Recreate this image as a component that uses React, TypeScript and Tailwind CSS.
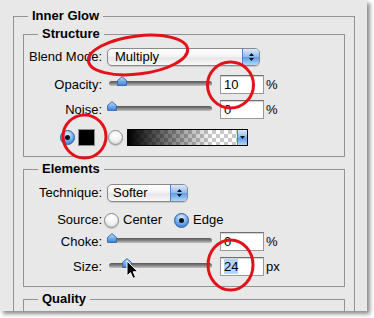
import type { ReactNode } from 'react'

function Label({ children }: { children: ReactNode }) {
  return <span className="w-[78px] shrink-0 text-right">{children}</span>
}

function Stepper() {
  return (
    <span className="flex w-[17px] shrink-0 flex-col items-center justify-center gap-[2px] border-l border-[#4f7fc0] bg-[linear-gradient(#dcebfc,#8dbcf1_48%,#5b9de9_52%,#b4d6f8)]">
      <svg width="5" height="3" viewBox="0 0 5 3">
        <path d="M2.5 0 L5 3 L0 3 Z" fill="#111" />
      </svg>
      <svg width="5" height="3" viewBox="0 0 5 3">
        <path d="M0 0 L5 0 L2.5 3 Z" fill="#111" />
      </svg>
    </span>
  )
}

function Popup({ value, width, pad }: { value: string; width: string; pad: string }) {
  return (
    <div
      className={`ml-[5px] flex h-[18px] ${width} overflow-hidden rounded-[5px] border border-[#8a8a8a] bg-[linear-gradient(#ffffff,#f5f5f5_45%,#e6e6e6_55%,#f7f7f7)] shadow-[0_1px_1px_rgba(0,0,0,0.15)]`}
    >
      <span className={`flex-1 ${pad} leading-[16px]`}>{value}</span>
      <Stepper />
    </div>
  )
}

function Thumb() {
  return (
    <svg width="10" height="10" viewBox="0 0 10 10">
      <defs>
        <linearGradient id="thumb" x1="0" y1="0" x2="0" y2="1">
          <stop offset="0" stopColor="#c6e0fb" />
          <stop offset="0.5" stopColor="#78b0ee" />
          <stop offset="1" stopColor="#3f82dc" />
        </linearGradient>
      </defs>
      <path d="M5 0.6 L9.4 4.4 L9.4 9.4 L0.6 9.4 L0.6 4.4 Z" fill="url(#thumb)" stroke="#3b69aa" strokeWidth="1" strokeLinejoin="round" />
    </svg>
  )
}

function Slider({ offset }: { offset: string }) {
  return (
    <div className="relative ml-[5px] h-[19px] w-[105px] shrink-0">
      <div className="ml-[2px] mt-[6px] h-[5px] rounded-full bg-[linear-gradient(#555555,#8a8a8a_55%,#c4c4c4)]" />
      <div className={`absolute top-[1px] ${offset}`}>
        <Thumb />
      </div>
    </div>
  )
}

function Field({ children, unit }: { children: ReactNode; unit: string }) {
  return (
    <>
      <div className="ml-[8px] h-[19px] w-[44px] shrink-0 border border-[#999999] border-t-[#6f6f6f] bg-white pl-[3px] leading-[17px] shadow-[inset_0_1px_1px_rgba(0,0,0,0.18)]">
        {children}
      </div>
      <span className="ml-[2px]">{unit}</span>
    </>
  )
}

function Radio({ on, className = '' }: { on?: boolean; className?: string }) {
  return on ? (
    <span
      className={`flex h-[15px] w-[15px] shrink-0 items-center justify-center rounded-full border border-[#2d5e9e] bg-[radial-gradient(circle_at_50%_28%,#e2f0ff,#6aa8ee_55%,#2c6cc6)] ${className}`}
    >
      <span className="h-[5px] w-[5px] rounded-full bg-[#111]" />
    </span>
  ) : (
    <span
      className={`block h-[15px] w-[15px] shrink-0 rounded-full border border-[#8a8a8a] bg-[radial-gradient(circle_at_50%_30%,#ffffff,#f3f3f3_50%,#c9c9c9)] shadow-[0_1px_1px_rgba(0,0,0,0.15)] ${className}`}
    />
  )
}

function Group({ title, children }: { title: string; children: ReactNode }) {
  return (
    <fieldset className="border border-[#939393]">
      <legend className="ml-[14px] px-[4px] font-bold leading-[16px]">{title}</legend>
      {children}
    </fieldset>
  )
}

export default function App() {
  return (
    <div className="h-[318px] w-[374px] bg-white font-['Liberation_Sans',Arial,sans-serif] text-[13px] text-black">
      <div className="relative h-[311px] w-[367px] overflow-hidden bg-[#e8e8e8] pl-[13px] pt-[8px] shadow-[3px_3px_4px_rgba(0,0,0,0.45)]">
        <div className="w-[342px]">
          <Group title="Inner Glow">
            <div className="flex flex-col px-[9px] pb-[40px] pt-[2px]">
              <Group title="Structure">
                <div className="flex flex-col pb-[10px] pt-[6px]">
                  <div className="flex h-[18px] items-center">
                    <Label>Blend Mode:</Label>
                    <Popup value="Multiply" width="w-[153px]" pad="pl-[7px]" />
                  </div>
                  <div className="mt-[9px] flex h-[19px] items-center">
                    <Label>Opacity:</Label>
                    <Slider offset="left-[10px]" />
                    <Field unit="%">10</Field>
                  </div>
                  <div className="mt-[6px] flex h-[19px] items-center">
                    <Label>Noise:</Label>
                    <Slider offset="left-0" />
                    <Field unit="%">0</Field>
                  </div>
                  <div className="mt-[10px] flex h-[17px] items-center pl-[36px]">
                    <Radio on />
                    <span className="ml-[3px] h-[17px] w-[17px] border border-[#8c8c8c] bg-black" />
                    <Radio className="ml-[13px]" />
                    <div className="ml-[4px] flex h-[17px] border border-black">
                      <span className="w-[109px] bg-[linear-gradient(to_right,#000000_0%,rgba(0,0,0,0)_78%),repeating-conic-gradient(#c8c8c8_0_25%,#ffffff_0_50%)] [background-size:100%_100%,8px_8px]" />
                      <span className="flex w-[10px] items-center justify-center border-l border-[#4f7fc0] bg-[linear-gradient(#dcebfc,#8dbcf1_48%,#5b9de9_52%,#b4d6f8)]">
                        <svg width="5" height="3" viewBox="0 0 5 3">
                          <path d="M0 0 L5 0 L2.5 3 Z" fill="#111" />
                        </svg>
                      </span>
                    </div>
                  </div>
                </div>
              </Group>

              <div className="mt-[4px]">
                <Group title="Elements">
                  <div className="flex flex-col pb-[10px] pt-[7px]">
                    <div className="flex h-[18px] items-center">
                      <Label>Technique:</Label>
                      <Popup value="Softer" width="w-[81px]" pad="pl-[5px]" />
                    </div>
                    <div className="mt-[10px] flex h-[16px] items-center">
                      <Label>Source:</Label>
                      <Radio className="ml-[2px]" />
                      <span className="ml-[4px]">Center</span>
                      <Radio on className="ml-[12px]" />
                      <span className="ml-[4px]">Edge</span>
                    </div>
                    <div className="mt-[4px] flex h-[19px] items-center">
                      <Label>Choke:</Label>
                      <Slider offset="left-0" />
                      <Field unit="%">0</Field>
                    </div>
                    <div className="mt-[6px] flex h-[19px] items-center">
                      <Label>Size:</Label>
                      <Slider offset="left-[15px]" />
                      <Field unit="px">
                        <span className="bg-[#b5d5ff]">24</span>
                      </Field>
                    </div>
                  </div>
                </Group>
              </div>

              <div className="mt-[4px]">
                <Group title="Quality">
                  <div className="h-[40px]" />
                </Group>
              </div>
            </div>
          </Group>
        </div>

        {/* cursor */}
        <svg className="pointer-events-none absolute left-[126px] top-[260px]" width="14" height="20" viewBox="0 0 14 20">
          <path d="M1 1 L1 16 L4.5 12.6 L7 18.4 L9.6 17.3 L7.2 11.8 L12 11.8 Z" fill="#000" stroke="#fff" strokeWidth="1" strokeLinejoin="round" />
        </svg>

        {/* red annotations */}
        <svg className="pointer-events-none absolute left-0 top-0" width="367" height="311" viewBox="0 0 367 311">
          <g fill="none" stroke="#e3121a" strokeWidth="3">
            <ellipse cx="138" cy="55" rx="50" ry="19" transform="rotate(-7 138 55)" />
            <ellipse cx="230.5" cy="85" rx="23" ry="23" />
            <ellipse cx="84.5" cy="136.5" rx="21.5" ry="21.5" />
            <ellipse cx="230.5" cy="265" rx="22.5" ry="25" />
          </g>
        </svg>
      </div>
    </div>
  )
}
